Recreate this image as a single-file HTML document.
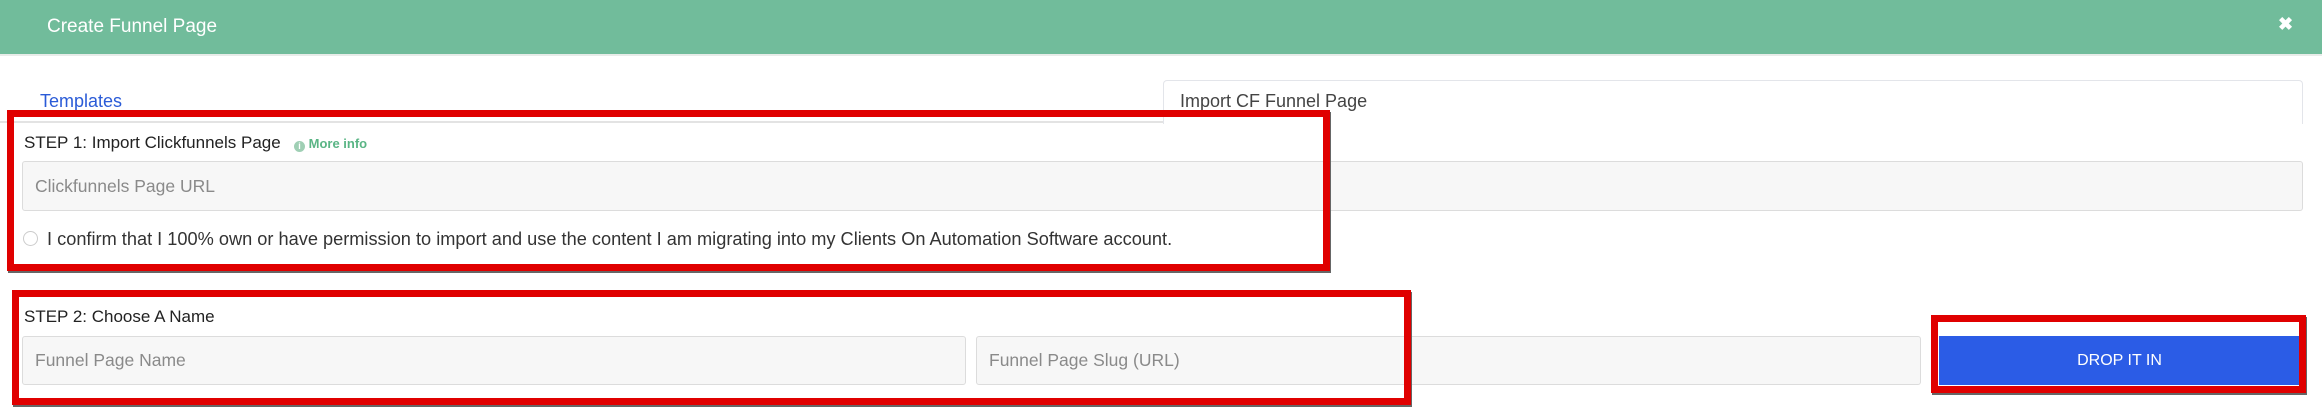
<!DOCTYPE html>
<html><head><meta charset="utf-8"><style>
*{box-sizing:border-box;margin:0;padding:0}
body{width:2322px;height:412px;background:#fff;font-family:"Liberation Sans",sans-serif;position:relative;overflow:hidden;color:#333}
.a{position:absolute}
.hdr{left:0;top:0;width:2322px;height:56px;background:#71bc9b;border-bottom:2px solid #e8ece9}
.inp{background:#f7f7f7;border:1.5px solid #dcdcdc;border-radius:3px;color:#8a8a8a;font-size:17.5px;padding-left:12px;display:flex;align-items:center}
.red{border:7px solid #e00000;box-shadow:1px 2px 0 #666}
</style></head><body>
<div class="a hdr"></div>
<div class="a" style="left:47px;top:16px;color:#fff;font-size:19px">Create Funnel Page</div>
<div class="a" style="left:2278px;top:14px;color:#fff;font-size:18px;font-weight:bold">✖</div>

<div class="a" style="left:0;top:121px;width:1164px;height:2px;background:#e3e3e3"></div>
<div class="a" style="left:1163px;top:80px;width:1140px;height:44px;border:1.5px solid #e3e5ea;border-bottom:none;border-radius:4px 4px 0 0;background:#fff"></div>
<div class="a" style="left:1180px;top:91px;font-size:18px;color:#444">Import CF Funnel Page</div>
<div class="a" style="left:40px;top:91px;font-size:18px;color:#2a5bd7">Templates</div>

<div class="a" style="left:24px;top:133px;font-size:17px;color:#222">STEP 1: Import Clickfunnels Page</div>
<div class="a" style="left:294px;top:136px;font-size:13px;color:#5ab585;font-weight:bold"><span style="display:inline-block;width:11px;height:11px;border-radius:50%;background:#9fcfb4;color:#fff;font-size:9px;text-align:center;line-height:11px;vertical-align:-1px">i</span> More info</div>
<div class="a inp" style="left:22px;top:161px;width:2281px;height:50px">Clickfunnels Page URL</div>
<div class="a" style="left:23px;top:231px;width:15px;height:15px;border:1px solid #ccc;border-radius:50%"></div>
<div class="a" style="left:47px;top:229px;font-size:18.2px;color:#333">I confirm that I 100% own or have permission to import and use the content I am migrating into my Clients On Automation Software account.</div>

<div class="a" style="left:24px;top:307px;font-size:17px;color:#222">STEP 2: Choose A Name</div>
<div class="a inp" style="left:22px;top:336px;width:944px;height:49px">Funnel Page Name</div>
<div class="a inp" style="left:976px;top:336px;width:945px;height:49px">Funnel Page Slug (URL)</div>
<div class="a" style="left:1939px;top:336px;width:361px;height:49px;background:#2b5ce6;color:#fff;font-size:16px;display:flex;align-items:center;justify-content:center">DROP IT IN</div>

<div class="a red" style="left:7px;top:110px;width:1323px;height:161px"></div>
<div class="a red" style="left:12px;top:290px;width:1399px;height:115px"></div>
<div class="a red" style="left:1931px;top:315px;width:375px;height:78px"></div>
</body></html>
